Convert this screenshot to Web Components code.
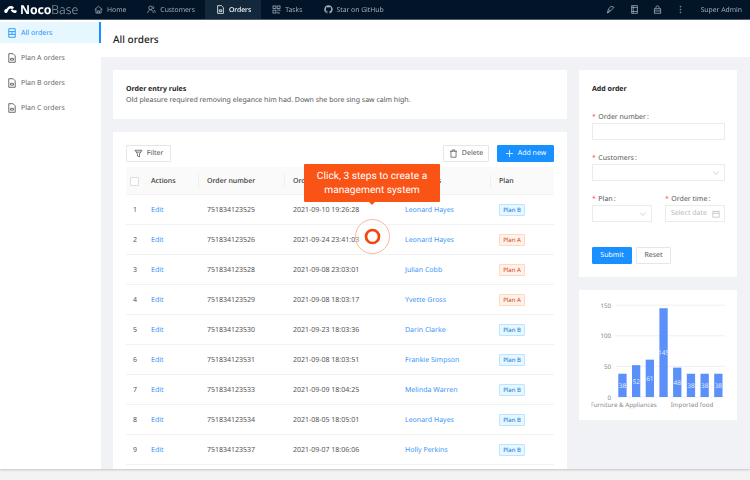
<!DOCTYPE html>
<html>
<head>
<meta charset="utf-8">
<title>NocoBase</title>
<style>
  html, body { margin: 0; height: 100%; overflow: hidden; background: #f3f3f3; }
  body { font-family: "Noto Sans", "Liberation Sans", sans-serif; font-size: 7px; color: #4a4a4a; text-rendering: geometricPrecision; }
</style>
</head>
<body>
<noco-app></noco-app>

<script>
const ICONS = {
  home: '<path d="M1 7.200 7 2l6 5.200M3 6v6.500h8V6M5.600 12.500V9h2.800v3.500"/>',
  users: '<circle cx="5.500" cy="4.500" r="2.800"/><path d="M1 12.500c.4-3.200 2.200-5 4.500-5s4.100 1.800 4.500 5M8.800 1.800c1.800.4 2.400 3.200.8 4.500M10.800 7.800c1.200.9 1.900 2.300 2.200 4"/>',
  file: '<path d="M2.500 1h6l3 3v9h-9zM5 7.500h4v2.500H5z"/>',
  doc: '<path d="M2.500 1h9v12h-9zM2.500 5h9M2.500 9h9M5.500 7h3"/>',
  grid: '<rect x="1.500" y="1.500" width="4.500" height="4"/><rect x="8" y="1.500" width="4.500" height="4"/><rect x="1.500" y="8" width="4.500" height="4.500"/><path d="M8 8h4.500v1.500M8 10.500v2h4.500"/>',
  brush: '<path d="M12.500 3.500 7.500 2 3.800 6.500l3 3zM3.800 6.500 2 12.500l5-2.800M2 12.500l3-3.500"/>',
  book: '<path d="M2.500 1h9v12h-9zM2.500 4h9M2.500 10h9M5 1v12"/>',
  lock: '<rect x="2" y="6" width="10" height="6.800"/><path d="M4.500 6V3.800a2.500 2.500 0 0 1 5 0V6M2 9.300h10"/>',
  dots: '<circle cx="7" cy="2.500" r=".7"/><circle cx="7" cy="7" r=".7"/><circle cx="7" cy="11.500" r=".7"/>',
  filter: '<path d="M1.500 2h11L8.600 7.500v4.800l-3.200-1.500V7.500zM3.200 4.800h7.600"/>',
  trash: '<path d="M1.500 3.500h11M5 3.500V1.500h4v2M3 3.500v9.300h8V3.500"/>',
  plus: '<path d="M7 1.500v11M1.500 7h11"/>',
  down: '<path d="M2 4.500 7 9.500l5-5"/>',
  date: '<rect x="1.500" y="2.800" width="11" height="9.700"/><path d="M1.500 6h11M4.500 1.200v3M9.500 1.200v3"/>',
};
const GITHUB = '<path fill="currentColor" stroke="none" d="M7 .5a6.500 6.500 0 0 0-2.060 12.670c.33.060.44-.14.44-.31v-1.140c-1.810.39-2.190-.88-2.190-.88-.3-.75-.72-.95-.72-.95-.59-.4.040-.39.040-.39.650.040 1 .67 1 .67.580 1 1.520.71 1.890.54.060-.42.230-.71.410-.87-1.440-.16-2.960-.72-2.960-3.200 0-.71.250-1.290.670-1.740-.070-.16-.290-.83.060-1.720 0 0 .550-.18 1.790.660a6.200 6.200 0 0 1 3.260 0c1.240-.84 1.790-.66 1.790-.66.350.890.130 1.560.060 1.720.420.450.670 1.030.670 1.740 0 2.490-1.520 3.030-2.970 3.190.240.200.450.600.450 1.210v1.790c0 .170.120.370.450.310A6.500 6.500 0 0 0 7 .5z"/>';

class NocoIcon extends HTMLElement {
  connectedCallback() {
    const size = this.getAttribute("size") || 10;
    const name = this.getAttribute("name");
    const body = name === "github" ? GITHUB : ICONS[name];
    this.attachShadow({ mode: "open" }).innerHTML = `
      <style>
        :host { display: inline-flex; flex: none; }
        svg { display: block; fill: none; stroke: currentColor; stroke-width: 1.200; }
      </style>
      <svg width="${size}" height="${size}" viewBox="0 0 14 14">${body}</svg>`;
  }
}
customElements.define("noco-icon", NocoIcon);

class NocoHeader extends HTMLElement {
  connectedCallback() {
    const items = [["home", "Home"], ["users", "Customers"], ["file", "Orders", true], ["grid", "Tasks"], ["github", "Star on GitHub"]];
    this.attachShadow({ mode: "open" }).innerHTML = `
      <style>
        :host { display: flex; align-items: stretch; height: 19px; background: #021428; color: #a4aeb8; font-size: 6.800px; box-shadow: 0 1px 0 #555d66; position: relative; z-index: 2; }
        .logo { width: 83px; display: flex; align-items: center; gap: 3px; padding-left: 4px; box-sizing: border-box; color: #fff; flex: none; }
        .logo b { font-size: 12.300px; font-weight: 700; letter-spacing: -.1px; }
        .logo span { font-size: 12.300px; font-weight: 300; margin-left: -3px; color: #98a2ad; }
        nav { display: flex; }
        a { display: flex; align-items: center; gap: 4px; padding: 0 10px 0 11px; }
        a.on { background: #14283c; color: #fff; font-weight: 500; }
        .right { margin-left: auto; display: flex; align-items: center; padding-right: 8px; }
        .right noco-icon { width: 23.400px; justify-content: center; }
        .right span { margin-left: 8px; }
      </style>
      <div class="logo">
        <svg width="13" height="9" viewBox="0 0 14 9"><path fill="#fff" d="M.3 6.300C.3 4.800 1.600 3.800 3 3.800 3.800 1.800 5.300.6 7.300.6c1.500 0 2.800.7 3.600 2L8.600 4.200C8.100 3.600 7.600 3.300 6.900 3.300 5.700 3.300 5 4.600 4.300 6 3.800 7.300 3 8.200 2.100 8.200 1 8.200.3 7.400.3 6.300zM13.700 6.300c0 1.200-.9 2-2.100 2-1.700 0-3.100-1.200-4.400-2.700l1.700-1.300c.7.700 1.500 1.100 2.400 1.100 1.300 0 2.400 0 2.400.9z"/></svg>
        <b>Noco</b><span>Base</span>
      </div>
      <nav>${items.map(([icon, label, on]) => `
        <a class="${on ? "on" : ""}"><noco-icon name="${icon}" size="9"></noco-icon>${label}</a>`).join("")}
      </nav>
      <div class="right">
        <noco-icon name="brush" size="9"></noco-icon>
        <noco-icon name="book" size="9"></noco-icon>
        <noco-icon name="lock" size="9"></noco-icon>
        <noco-icon name="dots" size="9"></noco-icon>
        <span>Super Admin</span>
      </div>`;
  }
}
customElements.define("noco-header", NocoHeader);

class NocoSidebar extends HTMLElement {
  connectedCallback() {
    const items = ["All orders", "Plan A orders", "Plan B orders", "Plan C orders"];
    this.attachShadow({ mode: "open" }).innerHTML = `
      <style>
        :host { display: block; width: 101px; flex: none; background: #fff; padding-top: 3px; box-sizing: border-box; color: #666; font-size: 7px; }
        div { height: 21px; margin-bottom: 4px; padding-top: 1px; display: flex; align-items: center; gap: 4px; padding-left: 7px; box-sizing: border-box; }
        div.on { background: #e6f7ff; color: #1890ff; border-right: 2px solid #1890ff; }
        noco-icon { color: #555; }
        .on noco-icon { color: #1890ff; }
      </style>
      ${items.map((t, i) => `<div class="${i ? "" : "on"}"><noco-icon name="${i ? "file" : "doc"}" size="10"></noco-icon>${t}</div>`).join("")}`;
  }
}
customElements.define("noco-sidebar", NocoSidebar);

class NocoCard extends HTMLElement {
  connectedCallback() {
    this.attachShadow({ mode: "open" }).innerHTML = `
      <style>
        :host { display: block; background: #fff; box-sizing: border-box; }
      </style>
      <slot></slot>`;
  }
}
customElements.define("noco-card", NocoCard);

class NocoTag extends HTMLElement {
  connectedCallback() {
    const a = this.textContent.trim() === "Plan A";
    this.attachShadow({ mode: "open" }).innerHTML = `
      <style>
        :host { display: block; width: 26px; height: 12px; box-sizing: border-box; text-align: center; font-size: 6px; line-height: 10px; border: 1px solid ${a ? "#ffd8bf" : "#bae7ff"}; background: ${a ? "#fff2e8" : "#e6f7ff"}; color: ${a ? "#d4380d" : "#096dd9"}; border-radius: 1px; }
      </style>
      <slot></slot>`;
  }
}
customElements.define("noco-tag", NocoTag);

class NocoButton extends HTMLElement {
  connectedCallback() {
    this.attachShadow({ mode: "open" }).innerHTML = `
      <style>
        :host { display: inline-flex; align-items: center; justify-content: center; gap: 4px; height: 17px; box-sizing: border-box; border: 1px solid #e6e6e6; background: #fff; color: #555; font-size: 7px; border-radius: 1px; }
        :host([primary]) { background: #1890ff; border-color: #1890ff; color: #fff; }
      </style>
      <slot></slot>`;
  }
}
customElements.define("noco-button", NocoButton);

class OrdersTable extends HTMLElement {
  connectedCallback() {
    const rows = [
      ["751834123525", "2021-09-10 19:26:28", "Leonard Hayes", "B"],
      ["751834123526", "2021-09-24 23:41:03", "Leonard Hayes", "A"],
      ["751834123528", "2021-09-08 23:03:01", "Julian Cobb", "A"],
      ["751834123529", "2021-09-08 18:03:17", "Yvette Gross", "A"],
      ["751834123530", "2021-09-23 18:03:36", "Darin Clarke", "B"],
      ["751834123531", "2021-09-08 18:03:51", "Frankie Simpson", "B"],
      ["751834123533", "2021-09-09 18:04:25", "Melinda Warren", "B"],
      ["751834123534", "2021-08-05 18:05:01", "Leonard Hayes", "B"],
      ["751834123537", "2021-09-07 18:06:06", "Holly Perkins", "B"],
    ];
    this.attachShadow({ mode: "open" }).innerHTML = `
      <style>
        :host { display: block; color: #555; font-size: 7px; }
        .row { display: grid; grid-template-columns: 25px 56px 86px 112px 94px 55px; height: 30px; padding-top: 1px; align-items: center; border-bottom: 1px solid #f2f2f2; box-sizing: border-box; }
        .row > span:first-child { padding-left: 7px; }
        .head { height: 28px; background: #fafafa; color: #333; font-weight: 500; }
        .head div { position: relative; }
        .head div:nth-child(n+3)::before { content: ""; position: absolute; left: -9px; top: -3px; width: 1px; height: 14px; background: #f0f0f0; }
        .box { width: 9px; height: 9px; margin-left: 4px; box-sizing: border-box; border: 1px solid #dcdcdc; background: #fff; border-radius: 1px; }
        .link { color: #4096f8; }
      </style>
      <div class="row head">
        <div class="box"></div><div>Actions</div><div>Order number</div><div>Order time</div><div>Customers</div><div>Plan</div>
      </div>
      ${rows.map((r, i) => `
      <div class="row">
        <span>${i + 1}</span><span class="link">Edit</span><span>${r[0]}</span><span>${r[1]}</span><span class="link">${r[2]}</span><span><noco-tag>Plan ${r[3]}</noco-tag></span>
      </div>`).join("")}`;
  }
}
customElements.define("orders-table", OrdersTable);

class OrderForm extends HTMLElement {
  connectedCallback() {
    this.attachShadow({ mode: "open" }).innerHTML = `
      <style>
        :host { display: block; padding: 14px 12px 13px 13px; color: #555; font-size: 7px; }
        h4 { margin: 0 0 17px; font-size: 7px; line-height: 11px; font-weight: 700; color: #222; }
        label { display: block; line-height: 11px; }
        label::before { content: "*"; color: #ff4d4f; margin-right: 2.500px; }
        .f { margin-bottom: 13px; }
        .in { height: 17px; border: 1px solid #ebebeb; box-sizing: border-box; display: flex; align-items: center; justify-content: flex-end; padding: 0 4px; color: #bbb; }
        .two { display: grid; grid-template-columns: 60px 60px; column-gap: 13px; margin-bottom: 25px; }
        .ph { flex: 1; padding-left: 1px; }
        .btns { display: flex; gap: 4px; }
        .btns noco-button:first-child { width: 40px; }
        .btns noco-button:last-child { width: 35px; }
      </style>
      <h4>Add order</h4>
      <div class="f"><label>Order number&#8201;:</label><div class="in"></div></div>
      <div class="f"><label>Customers&#8201;:</label><div class="in"><noco-icon name="down" size="8"></noco-icon></div></div>
      <div class="two">
        <div><label>Plan&#8201;:</label><div class="in"><noco-icon name="down" size="8"></noco-icon></div></div>
        <div><label>Order time&#8201;:</label><div class="in"><span class="ph">Select date</span><noco-icon name="date" size="8"></noco-icon></div></div>
      </div>
      <div class="btns"><noco-button primary>Submit</noco-button><noco-button>Reset</noco-button></div>`;
  }
}
customElements.define("order-form", OrderForm);

class OrdersChart extends HTMLElement {
  connectedCallback() {
    const vals = [38, 52, 61, 145, 48, 38, 38, 38];
    const y0 = 107;
    const scale = 0.612;
    const bars = vals.map((v, i) => {
      const x = 39.300 + i * 13.700;
      const h = v * scale;
      return `<rect x="${x}" y="${y0 - h}" width="8.300" height="${h}" fill="#5b8ff9"/>
        <text x="${x + 4.150}" y="${y0 - h / 2 + 2.500}" text-anchor="middle" fill="#dfe9ff" font-size="6.500">${v}</text>`;
    }).join("");
    const grid = [0, 50, 100, 150].map(t => {
      const y = y0 - t * scale;
      return `<line x1="36.700" x2="146" y1="${y}" y2="${y}" stroke="#efefef"/>
        <text x="32" y="${y + 2.500}" text-anchor="end" fill="#8a8a8a" font-size="6.200">${t}</text>`;
    }).join("");
    this.attachShadow({ mode: "open" }).innerHTML = `
      <style>
        :host { display: block; height: 130px; overflow: hidden; }
        svg { display: block; font-family: "Noto Sans", sans-serif; }
      </style>
      <svg width="158" height="130" viewBox="0 0 158 130">
        <clipPath id="c"><rect x="12.500" y="100" width="140" height="30"/></clipPath>
        ${grid}${bars}
        <text x="11.500" y="117" fill="#8a8a8a" font-size="6.200" clip-path="url(#c)">Furniture &amp; Appliances</text>
        <text x="91.700" y="117" fill="#8a8a8a" font-size="6.200">Imported food</text>
      </svg>`;
  }
}
customElements.define("orders-chart", OrdersChart);

class NocoTooltip extends HTMLElement {
  connectedCallback() {
    this.attachShadow({ mode: "open" }).innerHTML = `
      <style>
        :host { position: absolute; left: 304px; top: 164px; width: 136px; height: 38px; padding-top: 1px; box-sizing: border-box; display: flex; align-items: center; justify-content: center; text-align: center; background: #fa5316; color: #fff; font-family: Roboto, sans-serif; font-size: 10.200px; line-height: 14px; z-index: 3; border-radius: 1px; }
        :host::after { content: ""; position: absolute; left: 65px; bottom: -3px; border: 3px solid transparent; border-bottom: 0; border-top-color: #fa5316; }
      </style>
      <slot></slot>`;
  }
}
customElements.define("noco-tooltip", NocoTooltip);

class NocoPulse extends HTMLElement {
  connectedCallback() {
    this.attachShadow({ mode: "open" }).innerHTML = `
      <style>
        :host { position: absolute; left: 355px; top: 219px; width: 35px; height: 35px; z-index: 3; }
        svg { display: block; }
      </style>
      <svg width="35" height="35" viewBox="0 0 35 35">
        <circle cx="17.500" cy="17.500" r="17" fill="#fff" fill-opacity=".3" stroke="#fdb7a0"/>
        <circle cx="17.500" cy="17.500" r="6.500" fill="none" stroke="#f4450f" stroke-width="2.700"/>
      </svg>`;
  }
}
customElements.define("noco-pulse", NocoPulse);

class NocoApp extends HTMLElement {
  connectedCallback() {
    this.attachShadow({ mode: "open" }).innerHTML = `
      <style>
        :host { display: flex; flex-direction: column; height: 469px; position: relative; box-shadow: 0 1px 2px #c4c4c4; overflow: hidden; filter: blur(.3px); }
        .body { flex: 1; min-height: 0; display: flex; }
        main { flex: 1; min-width: 0; background: #f0f2f5; display: flex; flex-direction: column; }
        .title { height: 38px; padding-top: 1px; box-sizing: border-box; background: #fff; padding-left: 12px; display: flex; align-items: center; font-size: 10px; color: #222; font-weight: 500; flex: none; }
        .cols { display: grid; grid-template-columns: 454px 158px; column-gap: 12px; padding: 13px 13px 0 12px; }
        .left, .right { display: flex; flex-direction: column; gap: 13px; }
        .rules { display: block; height: 49px; padding: 14px 13px; font-size: 7px; line-height: 11px; color: #555; }
        .rules b { display: block; color: #222; }
        .tools { display: flex; gap: 8px; justify-content: flex-end; padding-bottom: 5px; }
        .tools noco-button:nth-child(1) { width: 45px; margin-right: auto; }
        .tools noco-button:nth-child(2) { width: 46px; }
        .tools noco-button:nth-child(3) { width: 57px; }
        .list { height: 337px; padding: 13px 13px 0; overflow: hidden; }
      </style>
      <noco-header></noco-header>
      <div class="body">
        <noco-sidebar></noco-sidebar>
        <main>
          <div class="title">All orders</div>
          <div class="cols">
            <div class="left">
              <noco-card class="rules"><b>Order entry rules</b>Old pleasure required removing elegance him had. Down she bore sing saw calm high.</noco-card>
              <noco-card class="list">
                <div class="tools">
                  <noco-button><noco-icon name="filter" size="9"></noco-icon>Filter</noco-button>
                  <noco-button><noco-icon name="trash" size="9"></noco-icon>Delete</noco-button>
                  <noco-button primary><noco-icon name="plus" size="9"></noco-icon>Add new</noco-button>
                </div>
                <orders-table></orders-table>
              </noco-card>
            </div>
            <div class="right">
              <noco-card><order-form></order-form></noco-card>
              <noco-card><orders-chart></orders-chart></noco-card>
            </div>
          </div>
        </main>
      </div>
      <noco-tooltip>Click, 3 steps to create a<br>management system</noco-tooltip>
      <noco-pulse></noco-pulse>`;
  }
}
customElements.define("noco-app", NocoApp);
</script>
</body>
</html>
